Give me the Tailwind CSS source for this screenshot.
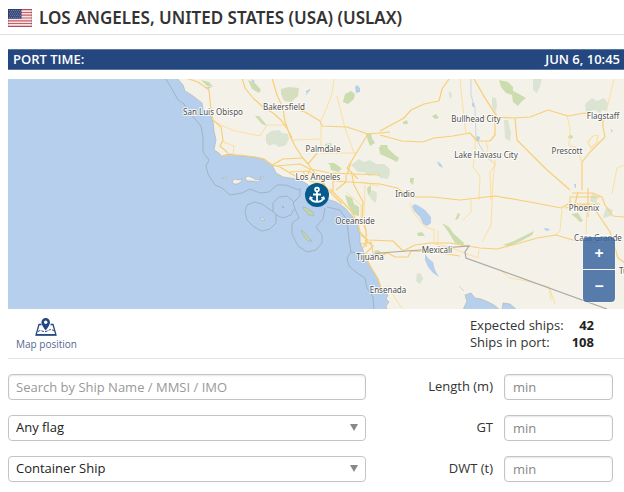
<!DOCTYPE html>
<html lang="en">
<head>
    <meta charset="UTF-8">
    <meta name="viewport" content="width=device-width, initial-scale=1.0">
    <title>Los Angeles port</title>
    <script src="https://cdn.jsdelivr.net/npm/@tailwindcss/browser@4"></script>
</head>
<body class="bg-white font-['Open_Sans','Noto_Sans',sans-serif] text-[13px] text-[#333]">
    <!-- Port name -->
    <header class="flex items-center gap-[7px] h-[35px] pt-[2px] pl-2 border-b border-[#e0e0e0]">
        <svg class="w-6 h-[18px] shrink-0" viewBox="0 0 24 18" role="img" aria-label="United States flag">
            <rect width="24" height="18" fill="#f3e4e6"/>
            <path d="M0 .7h24M0 3.5h24M0 6.2h24M0 9h24M0 11.8h24M0 14.5h24M0 17.3h24" stroke="#cb5a66" stroke-width="1.2"/>
            <rect width="13.5" height="9.7" fill="#36477a"/>
            <path d="M1 1.5h12M2 3.2h11M1 4.9h12M2 6.6h11M1 8.3h12" stroke="#a3acc8" stroke-width=".7" stroke-dasharray=".8 1.2"/>
            <rect x=".5" y=".5" width="23" height="17" fill="none" stroke="#000" stroke-opacity=".12"/>
        </svg>
        <h1 class="font-['Noto_Sans','Open_Sans',sans-serif] text-[17px] leading-6 font-semibold whitespace-nowrap">LOS ANGELES, UNITED STATES (USA) (USLAX)</h1>
    </header>

    <main class="pl-2 pt-[14px]">
        <!-- Port time -->
        <div class="flex items-center justify-between h-[21px] pl-[5px] pr-1 bg-[#24477f] border-y border-[#5c77a2] text-white font-semibold">
            <span>PORT TIME:</span>
            <span>JUN 6, 10:45</span>
        </div>

        <!-- Map -->
        <div class="relative mt-[9px] h-[230px] overflow-hidden bg-[#b5cfec]">
            <svg class="w-full h-full" viewBox="8 79 616 230" preserveAspectRatio="xMidYMid slice" role="img" aria-label="Map around Los Angeles">
                <!-- land -->
                <path fill="#f4f1e8" stroke="#b3b9b8" stroke-width=".7" d="M177 78L183 85 185 91 193 96 202 103 203 109 210 114 213 121 214 131 216 140 214 150 219 153 221 156 230 154 240 156 255 157 264 159 272 165 276 173 283 177 290 178 300 180 307 184 312 189 322 190 327 199 336 202 345 208 352 216 357 223 360 235 360 242 363 250 366 259 372 269 378 279 382 291 388 295 386 299 389 302 386 306 387 310H463L467 301 465 295 471 293 475 298 481 299 488 302 494 305 500 310 502 310 503 303 510 304 517 310H626V78z"/>
                <g fill="#f4f1e8" stroke="#a9afb0" stroke-width=".6">
                    <path d="M232 181l3-2 3 1 4-1-1 3-4 2-3 0zM245 178l3-2 5 2 3 2 5-1-3 3-6-1-5 0zM222 178l4-1 1 1-3 1zM260 177l3-1 1 1-2 1zM260 218l3 0 2 2-4 0z"/>
                    <path fill="#c4d6a3" d="M303 207l4 1 2 2 4 2 1 4-3-1-3 0-1-3-4-3zM301 230l4 3 3 4 4 4-4 0-5-6z"/>
                </g>

                <!-- forests -->
                <g fill="#dbe4d2">
                    <path d="M266 135l5-4 8-1 3 3 6 1 1 5-3 6-7 2-5-3-5 2-3-4zM351 165l8-6 5 3 6-2 6 4 8 0 6 5-2 6-8 2-4-3-7 2-5-4-6 0zM585 104l7-6 5 3 7-3 4 5-1 8-5-1-2 3-5-3-9 2zM533 79h9l-2 7-3 7-4-3zM380 165l5 1 5 6-2 7-8-1zM504 120l4 0 3 13-1 8-5-3zM492 97l4 1 1 8-2 7-3-7zM449 91l3 3-1 5-2-3zM417 273l4 1 2 5-3 5-4-3zM368 194l5-4 4 3-1 10-4-3zM592 193l6 4-2 7-6-3zM606 207l7 3-2 6-8 2z"/>
                </g>
                <path fill="#d5dfc0" d="M281 89l8-2 10 1-1 8-7 6-7-1-3-7z"/>
                <g fill="#cbdcae">
                    <path d="M499 80l9 2 5 5 0 4 6 3 7 4-5 4-3 4-5-4-1-7-6-2-5-6zM345 94l6-3 4 3-1 5-6 5-5-2zM366 134l5-1 1 5 3 5-5 3-2-5zM379 147l6-1 10 9 4 3-2 4-8-4-9-4zM330 165l6-1 5 4-2 4-8-2zM345 195l7 3 2 6 5 3 0 9-5-1-6-10zM442 223l7 4 5 7 10 9-1 3-8-3-6-10zM503 245l11-4 8-4 12-6-2 4-11 6-12 5zM255 116l4 0 5 6 3 4-5-2zM201 80l8 2 4 5-6-1zM248 80l7 3 6 7-2 3-7-4zM432 116l4-2 3 4-4 1zM403 122l4-2 1 4-5 0zM367 188l4-3 0 7-3 3zM410 178l4 0-1 7-3-3zM417 233l5-1 3 4-7 0zM571 214l7-1 5 8-3 1-4-4zM374 251l4-1 4 3-6 2zM455 220l3-7 2 1-2 5zM325 144l6-1 1 4-6 1zM328 163l6 0 8 6-6 2zM568 136l4-1 1 3-4 1zM380 145l7 0 1 3-6 2z"/>
                </g>

                <!-- lakes -->
                <path fill="#b5cfec" d="M412 206l3-2 4 2 6 4 6 7 0 6-4 3-4-2-3-7-6-6zM425 254l4 5 4 3 2 8 4 7-6-4-5-6-3-7zM355 87l2-2 3 3 0 4-4 1zM437 161l4 3 2 4-4-2zM472 103l2 0 1 5-3-2zM544 228l6 1-2 2-3-1zM477 136l3 1-1 4-3-1zM306 91l4-2 0 2-4 2zM251 79l4 2-2 2zM574 184l2 0 0 4-1 0zM611 129l2 2-2 1zM206 87l5 0-2 2z"/>
                <path fill="none" stroke="#c1d5ea" stroke-width=".9" d="M471 79L471 95 475 108 476 137 480 146 486 156 494 163M310 89L306 95M459 286L464 291"/>

                <!-- territorial waters -->
                <path fill="none" stroke="#a0abb9" stroke-width=".8" stroke-linejoin="round" d="M165 78L172 89 178 100 184 104 190 113 201 126 203 137 203 152 209 160 206 166 208 174 215 185 222 188 230 195 242 193 250 189 260 193 269 192 277 185 286 185 299 190M300 188V196L293 203M327 207L340 210 347 220 349 240 351 252 347 258 349 266 357 273 365 278 367 288 373 297 374 310M351 252L361 254M245 212L247 205 254 202 262 204 269 209 276 214 276 223 270 229 262 231 254 227 247 220zM273 212L273 203 279 197 287 196 294 202 298 198M276 215L283 218 291 215 294 209M293 203L295 209 299 218 292 223 292 234 298 246 307 252 316 250 322 243 322 235 316 227 323 219 325 208"/>
                <circle cx="283" cy="207" r=".8" fill="#999"/>

                <!-- minor roads -->
                <path fill="none" stroke="#fbe0a1" stroke-width="1" stroke-linejoin="round" d="M334 78L332 94 327 107 321 121M337 96L345 128 354 153M213 121L223 126 235 131 260 136 267 125 288 125M223 142L234 146 233 155M292 140L320 139M321 126L321 153 356 153M460 79L462 100 465 125 466 133M475 136L475 155 473 167 480 176 479 200M486 141L488 150 485 154M491 200L490 172 496 164 488 159M471 200L471 212 463 220M410 203L413 212 425 227 435 230M434 230V244M438 231V244M435 244L449 247 470 255 478 258 479 250M500 270L510 278 527 281 549 287 555 304M549 288L551 300M567 116L570 128 569 146 576 147 582 162M614 79L607 108M624 165L617 168 612 194M562 209L560 231 555 235M587 213L586 234M388 285L395 298 403 310M365 185L364 217 367 236M361 182L379 186M346 192L361 205 361 225M474 79L485 98 497 115M485 117H496M495 160L493 180 491 225 482 242"/>

                <!-- highways -->
                <g fill="none" stroke="#f8cf76" stroke-width="1.2" stroke-linejoin="round">
                    <path d="M242 78L245 88 253 98 263 107 273 113 281 120 288 130 292 138M272 78L277 95 283 108 285 122 291 138 295 146 302 157 308 164M186 78L198 82 209 90 211 110 213 120 221 127 223 140 220 146 228 153M284 106L305 112 320 121 322 126 347 127 368 134 390 132M380 135L402 141 423 142 434 138 453 136 470 133 477 141 490 141 495 135 495 117 513 118 530 117 548 110 568 116 584 113 603 116 603 127 605 137 590 152 582 162 582 190M380 131L404 118 411 110 424 104 439 101 442 89 449 79M474 79L485 98 497 117M515 118L517 140 530 153 546 169 570 190"/>
                    <path d="M368 134L360 147 351 162 347 175M221 156L240 155 255 157 264 159 272 165 280 167 300 179M272 165L283 159 302 158M308 164L318 152M275 166L300 164 310 169 330 173 380 175M308 164L314 172 320 181 333 195 342 204M290 172L307 171 320 175 335 181 350 182 380 184 397 188 410 197 432 197 460 200 495 196 530 202 561 208 570 203 570 197 600 197M303 172L310 181 319 183M333 173L333 193M320 175L325 186 324 196M351 162L347 168 358 179M346 175L346 182 336 190M310 169L307 177M330 189L341 200 351 211 358 223 360 232 367 240 363 248M352 175L354 185 363 202 362 219 366 231 366 247"/>
                    <path d="M361 235L368 240 393 241 403 251 415 245 430 243 450 243 468 246 480 248 497 249 520 243 537 238 556 235 573 240 597 243M380 256L388 253 395 257 408 257 411 251 435 252 460 256M365 240L373 246 366 253 367 260 372 269 378 279 382 291M361 244L371 242 373 253M366 261L378 255 386 253M572 193H593L602 197 605 205 613 216 624 217M578 192L575 204 578 210H598M588 188V217M594 208L610 232 618 258 625 263M573 204H600M565 208L590 204"/>
                    <path d="M588 142L593 136 598 135 597 142 591 148z" stroke="#fbe0a1"/>
                </g>

                <!-- country border -->
                <path fill="none" stroke="#a9a9a6" stroke-width="1.2" d="M365 256L380 253 420 250 469 246 465 252 466 258 607 309"/>

                <!-- place names -->
                <g class="font-['Noto_Sans','DejaVu_Sans',sans-serif] text-[8px]" fill="#505050" stroke="#fff" stroke-opacity=".8" stroke-width="2" stroke-linejoin="round" paint-order="stroke" text-anchor="middle">
                    <text x="213" y="115">San Luis Obispo</text>
                    <text x="284" y="110">Bakersfield</text>
                    <text x="323" y="152">Palmdale</text>
                    <text x="318" y="180">Los Angeles</text>
                    <text x="476" y="122">Bullhead City</text>
                    <text x="486" y="158">Lake Havasu City</text>
                    <text x="603" y="119">Flagstaff</text>
                    <text x="567" y="154">Prescott</text>
                    <text x="405" y="197">Indio</text>
                    <text x="355" y="224">Oceanside</text>
                    <text x="370" y="260">Tijuana</text>
                    <text x="437" y="253">Mexicali</text>
                    <text x="388" y="293">Ensenada</text>
                    <text x="584" y="211">Phoenix</text>
                    <text x="598" y="241">Casa Grande</text>
                    <text x="619" y="274" text-anchor="start">Tucson</text>
                </g>

                <!-- port marker -->
                <circle cx="317" cy="195" r="12" fill="#065a8c"/>
                <g fill="none" stroke="#fff" stroke-width="1.8">
                    <circle cx="317" cy="189.5" r="1.9"/>
                    <path d="M317 191.500v10M313 194.500h8M310.500 197.500c.5 3 3 4.300 6.500 4.300s6-1.300 6.500-4.300"/>
                    <path stroke-width="1.2" d="M309.500 199.500l.8-2.500 2.500 1M324.500 199.500l-.8-2.500-2.500 1"/>
                </g>
            </svg>
            <div class="absolute right-2 bottom-[6px] flex flex-col gap-px p-px rounded-sm bg-white/40">
                <button type="button" aria-label="Zoom in" class="size-8 rounded-t-sm bg-[#13498f]/70 text-white text-base leading-none font-bold">+</button>
                <button type="button" aria-label="Zoom out" class="size-8 rounded-b-sm bg-[#13498f]/70 text-white text-base leading-none font-bold">−</button>
            </div>
        </div>

        <!-- Ship counts -->
        <div class="flex items-start justify-between h-[50px] pt-2 pl-2 pr-[30px] border-b border-[#e4e4e4]">
            <a href="#" class="flex flex-col items-center text-[10px] leading-4 text-[#54698f]">
                <svg class="w-[22px] h-[18px] mt-px" viewBox="0 0 22 18" fill="none" stroke="#24477f">
                    <path stroke-width="1.3" d="M6.500 6.500H4L1 17h20L18 6.500h-2.500"/>
                    <path stroke-width="1.3" d="M1 16.700h20"/>
                    <path stroke-width="1" stroke-dasharray="2.5 1.2" d="M3 13.500c3-2.500 5 1 8 0s4-3.500 8-.5"/>
                    <path fill="#24477f" stroke="none" d="M10.700 0a4.300 4.300 0 0 0-4.300 4.300c0 3 4.300 8.200 4.300 8.200S15 7.300 15 4.300A4.300 4.300 0 0 0 10.700 0z"/>
                    <circle cx="10.700" cy="4.300" r="1.700" fill="#fff" stroke="none"/>
                </svg>
                Map position
            </a>
            <dl class="grid grid-cols-[auto_auto] gap-x-2 leading-[17px]">
                <dt>Expected ships:</dt>
                <dd class="text-right font-bold text-[#222]">42</dd>
                <dt>Ships in port:</dt>
                <dd class="text-right font-bold text-[#222]">108</dd>
            </dl>
        </div>

        <!-- Filters -->
        <form class="grid grid-cols-[minmax(0,1fr)_138px_109px] items-center gap-y-[15px] pt-[15px] pr-[11px]">
            <input type="text" aria-label="Search ships" placeholder="Search by Ship Name / MMSI / IMO" class="h-[26px] w-full px-[7px] border border-[#c4c4c4] rounded shadow-[inset_0_1px_2px_#0000001a] placeholder:text-[#999]">
            <label for="length" class="pr-[11px] text-right">Length (m)</label>
            <input id="length" type="text" placeholder="min" class="h-[26px] w-full px-2 border border-[#c4c4c4] rounded shadow-[inset_0_1px_2px_#0000001a] placeholder:text-[#888]">

            <div class="relative">
                <select aria-label="Flag" class="block appearance-none h-[26px] w-full px-[7px] border border-[#c4c4c4] rounded bg-white text-[#222]">
                    <option>Any flag</option>
                </select>
                <svg class="absolute right-2 top-[9px] w-2 h-[7px] pointer-events-none" viewBox="0 0 8 7"><path d="M0 0h8L4 7z" fill="#888"/></svg>
            </div>
            <label for="gt" class="pr-[11px] text-right">GT</label>
            <input id="gt" type="text" placeholder="min" class="h-[26px] w-full px-2 border border-[#c4c4c4] rounded shadow-[inset_0_1px_2px_#0000001a] placeholder:text-[#888]">

            <div class="relative">
                <select aria-label="Ship type" class="block appearance-none h-[26px] w-full px-[7px] border border-[#c4c4c4] rounded bg-white text-[#222]">
                    <option>Container Ship</option>
                </select>
                <svg class="absolute right-2 top-[9px] w-2 h-[7px] pointer-events-none" viewBox="0 0 8 7"><path d="M0 0h8L4 7z" fill="#888"/></svg>
            </div>
            <label for="dwt" class="pr-[11px] text-right">DWT (t)</label>
            <input id="dwt" type="text" placeholder="min" class="h-[26px] w-full px-2 border border-[#c4c4c4] rounded shadow-[inset_0_1px_2px_#0000001a] placeholder:text-[#888]">
        </form>
    </main>
</body>
</html>
